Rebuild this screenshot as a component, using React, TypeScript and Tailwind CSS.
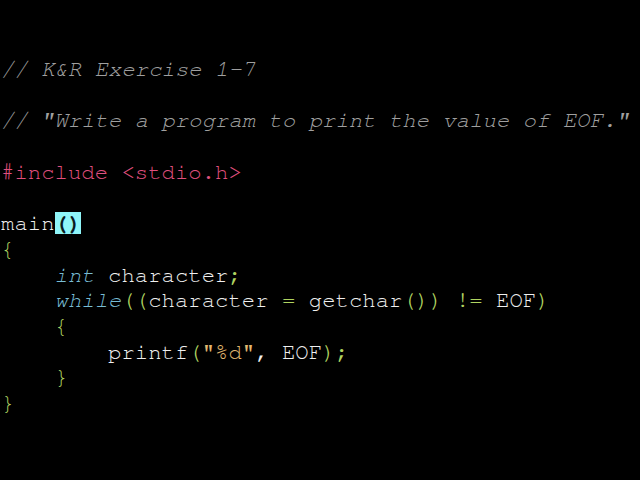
import React from 'react';

type Tok = [string, string];

const C = 'text-[#a0a0a0] italic';
const P = 'text-[#e0507f]';
const W = 'text-[#f0f0f0]';
const G = 'text-[#b0d460]';
const K = 'text-[#78bcd4] italic';
const S = 'text-[#e0b870]';

const LINES: Tok[][] = [
  [['// K&R Exercise 1-7', C]],
  [],
  [['// "Write a program to print the value of EOF."', C]],
  [],
  [['#include <stdio.h>', P]],
  [],
  [['main', W], ['HL', '']],
  [['{', G]],
  [['    ', W], ['int', K], [' character', W], [';', G]],
  [['    ', W], ['while', K], ['((', G], ['character ', W], ['=', G], [' getchar', W], ['())', G], [' ', W], ['!=', G], [' EOF', W], [')', G]],
  [['    ', W], ['{', G]],
  [['        printf', W], ['(', G], ['"%d"', S], [', EOF', W], [');', G]],
  [['    ', W], ['}', G]],
  [['}', G]],
];

export default function App() {
  return (
    <div className="w-[640px] h-[480px] bg-black overflow-hidden pt-[57px] pl-[1px]">
      <pre className="font-['Nimbus_Mono_PS','FreeMono','Courier_New','Liberation_Mono',monospace] text-[22.3px] leading-[25.7px] m-0">
        {LINES.map((line, i) => (
          <div key={i} className="h-[25.7px]">
            {line.map(([t, cls], j) =>
              t === 'HL' ? (
                <span key={j} className="bg-[#8ff5f8] text-[#0a1a20] font-bold">()</span>
              ) : (
                <span key={j} className={cls}>{t}</span>
              )
            )}
          </div>
        ))}
      </pre>
    </div>
  );
}
